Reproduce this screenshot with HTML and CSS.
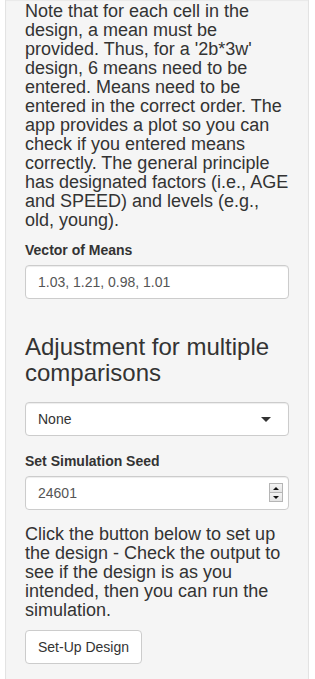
FILE: index.html
```html
<!DOCTYPE html>
<html>
<head>
<meta charset="utf-8">
<link rel="stylesheet" href="styles.css">
</head>
<body>
<div class="page">
  <div class="well">
    <p class="note">Note that for each cell in the design, a mean must be provided. Thus, for a '2b*3w' design, 6 means need to be entered. Means need to be entered in the correct order. The app provides a plot so you can check if you entered means correctly. The general principle has designated factors (i.e., AGE and SPEED) and levels (e.g., old, young).</p>
    <div class="form-group">
      <label class="control-label">Vector of Means</label>
      <div class="form-control">1.03, 1.21, 0.98, 1.01</div>
    </div>
    <h3 class="section-title">Adjustment for multiple comparisons</h3>
    <div class="form-group select-group">
      <div class="form-control select-box">
        <span class="select-value">None</span>
        <span class="caret"></span>
      </div>
    </div>
    <div class="form-group">
      <label class="control-label">Set Simulation Seed</label>
      <div class="form-control number-box">
        <span class="number-value">24601</span>
        <span class="spinner">
          <span class="spin-btn"><span class="tri-up"></span></span>
          <span class="spin-btn"><span class="tri-down"></span></span>
        </span>
      </div>
    </div>
    <p class="note note-bottom">Click the button below to set up the design - Check the output to see if the design is as you intended, then you can run the simulation.</p>
    <button class="btn" type="button">Set-Up Design</button>
  </div>
</div>
</body>
</html>
```

FILE: styles.css
```css
html, body {
  margin: 0;
  padding: 0;
  background: #ffffff;
}

body {
  font-family: "Liberation Sans", Arial, Helvetica, sans-serif;
  font-size: 14px;
  line-height: 1.42857;
  color: #333333;
}

.page {
  padding: 0 6px 0 5px;
}

.well {
  background: #f5f5f5;
  border: 1px solid #e3e3e3;
  border-top: 0;
  border-radius: 0 0 4px 4px;
  box-shadow: inset 0 1px 1px rgba(0, 0, 0, 0.05);
  padding: 2px 19px 19px 19px;
  min-height: 700px;
  box-sizing: border-box;
}

.note {
  font-size: 18px;
  line-height: 19px;
  margin: 0 0 10px 0;
  color: #333333;
}

.note-bottom {
  margin-top: 1px;
}

.form-group {
  margin-bottom: 15px;
}

.control-label {
  display: block;
  font-weight: bold;
  font-size: 14px;
  line-height: 20px;
  margin-bottom: 5px;
}

.form-control {
  box-sizing: border-box;
  height: 34px;
  padding: 6px 12px;
  font-size: 14px;
  line-height: 20px;
  color: #555555;
  background: #ffffff;
  border: 1px solid #cccccc;
  border-radius: 4px;
  box-shadow: inset 0 1px 1px rgba(0, 0, 0, 0.075);
}

.section-title {
  font-size: 24px;
  font-weight: normal;
  line-height: 1.1;
  margin: 35px 0 10px 0;
  color: #333333;
}

.select-group {
  margin-top: 15px;
}

.select-box {
  display: flex;
  align-items: center;
  justify-content: space-between;
  color: #333333;
  padding-right: 17px;
}

.caret {
  width: 0;
  height: 0;
  border-style: solid;
  border-width: 5px 5px 0 5px;
  border-color: #333333 transparent transparent transparent;
  margin-top: 1px;
}

.number-box {
  display: flex;
  align-items: center;
  justify-content: space-between;
  padding-right: 5px;
}

.spinner {
  display: flex;
  flex-direction: column;
  width: 14px;
  height: 19px;
}

.spin-btn {
  flex: 1;
  display: flex;
  align-items: center;
  justify-content: center;
  background: linear-gradient(#f4f4f4, #e4e4e4);
  border: 1px solid #b5b5b5;
  box-sizing: border-box;
}

.spin-btn + .spin-btn {
  border-top: 0;
}

.tri-up {
  width: 0;
  height: 0;
  border-style: solid;
  border-width: 0 3px 3px 3px;
  border-color: transparent transparent #111111 transparent;
}

.tri-down {
  width: 0;
  height: 0;
  border-style: solid;
  border-width: 3px 3px 0 3px;
  border-color: #111111 transparent transparent transparent;
}

.btn {
  display: inline-block;
  font-family: "Liberation Sans", Arial, Helvetica, sans-serif;
  font-size: 14px;
  line-height: 20px;
  padding: 6px 12px;
  color: #333333;
  background: #ffffff;
  border: 1px solid #cccccc;
  border-radius: 4px;
  margin: 0;
}
```
